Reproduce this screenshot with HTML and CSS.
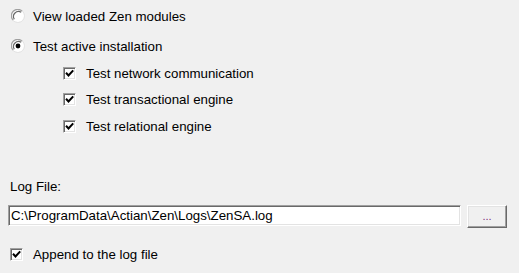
FILE: index.html
```html
<!DOCTYPE html>
<html lang="en">
<head>
    <meta charset="UTF-8">
    <title>Zen Test Options</title>
    <link rel="stylesheet" href="styles.css">
</head>
<body>
    <div class="panel">
        <div class="row radio-row first">
            <span class="radio">
                <svg width="14" height="14" viewBox="0 0 14 14">
                    <circle cx="7" cy="7" r="6" fill="#fff"/>
                    <path d="M2.2 11.2 A6.3 6.3 0 0 1 11.2 2.2" fill="none" stroke="#a0a0a0" stroke-width="1.2"/>
                    <path d="M3.3 10.2 A5 5 0 0 1 10.2 3.3" fill="none" stroke="#696969" stroke-width="1.2"/>
                    <path d="M2.2 11.6 A6.3 6.3 0 0 0 11.6 2.2" fill="none" stroke="#e3e3e3" stroke-width="1"/>
                </svg>
            </span>
            <span class="label">View loaded Zen modules</span>
        </div>
        <div class="row radio-row">
            <span class="radio">
                <svg width="14" height="14" viewBox="0 0 14 14">
                    <circle cx="7" cy="7" r="6" fill="#fff"/>
                    <path d="M2.2 11.2 A6.3 6.3 0 0 1 11.2 2.2" fill="none" stroke="#a0a0a0" stroke-width="1.2"/>
                    <path d="M3.3 10.2 A5 5 0 0 1 10.2 3.3" fill="none" stroke="#696969" stroke-width="1.2"/>
                    <path d="M2.2 11.6 A6.3 6.3 0 0 0 11.6 2.2" fill="none" stroke="#e3e3e3" stroke-width="1"/>
                    <circle cx="7" cy="7" r="2.4" fill="#000"/>
                </svg>
            </span>
            <span class="label">Test active installation</span>
        </div>

        <div class="sub-options">
            <div class="row check-row">
                <span class="check"><svg width="9" height="9" viewBox="0 0 9 9"><path d="M1 3.8 L3.5 6.5 L8.2 1.3" fill="none" stroke="#000" stroke-width="2"/></svg></span>
                <span class="label">Test network communication</span>
            </div>
            <div class="row check-row">
                <span class="check"><svg width="9" height="9" viewBox="0 0 9 9"><path d="M1 3.8 L3.5 6.5 L8.2 1.3" fill="none" stroke="#000" stroke-width="2"/></svg></span>
                <span class="label">Test transactional engine</span>
            </div>
            <div class="row check-row">
                <span class="check"><svg width="9" height="9" viewBox="0 0 9 9"><path d="M1 3.8 L3.5 6.5 L8.2 1.3" fill="none" stroke="#000" stroke-width="2"/></svg></span>
                <span class="label">Test relational engine</span>
            </div>
        </div>

        <div class="log-label">Log File:</div>
        <div class="log-line">
            <div class="text-box">C:\ProgramData\Actian\Zen\Logs\ZenSA.log</div>
            <div class="browse-button">...</div>
        </div>

        <div class="row append-row">
            <span class="check"><svg width="9" height="9" viewBox="0 0 9 9"><path d="M1 3.8 L3.5 6.5 L8.2 1.3" fill="none" stroke="#000" stroke-width="2"/></svg></span>
            <span class="label">Append to the log file</span>
        </div>
    </div>
</body>
</html>
```

FILE: styles.css
```css
body {
    margin: 0;
    padding: 0;
    background-color: #f0f0f0;
    font-family: 'Liberation Sans', Arial, sans-serif;
    font-size: 13.3px;
    color: #000;
}

.panel {
    display: flex;
    flex-direction: column;
    padding: 0 0 0 8px;
    width: 501px;
}

.row {
    display: flex;
    align-items: center;
    height: 16px;
}

.radio-row {
    padding-left: 3px;
    margin-top: 14px;
}

.radio-row.first {
    margin-top: 8px;
}

.radio {
    width: 14px;
    height: 14px;
    margin-right: 8px;
    display: flex;
}

.sub-options {
    display: flex;
    flex-direction: column;
    padding-left: 55px;
    margin-top: 11px;
    gap: 10.5px;
}

.check {
    width: 9px;
    height: 9px;
    padding: 1px;
    margin-right: 10px;
    background-color: #fff;
    border-top: 1px solid #a0a0a0;
    border-left: 1px solid #a0a0a0;
    border-bottom: 1px solid #fff;
    border-right: 1px solid #fff;
    box-shadow: inset 1px 1px 0 #696969, inset -1px -1px 0 #e3e3e3;
    display: flex;
    align-items: center;
    justify-content: center;
}

.log-label {
    margin-top: 45px;
    padding-left: 2px;
    height: 16px;
    line-height: 16px;
}

.log-line {
    display: flex;
    margin-top: 10px;
    gap: 6px;
}

.text-box {
    width: 449px;
    height: 19px;
    line-height: 19px;
    padding-left: 2px;
    background-color: #fff;
    border-top: 1px solid #a0a0a0;
    border-left: 1px solid #a0a0a0;
    border-bottom: 1px solid #fff;
    border-right: 1px solid #fff;
    box-shadow: inset 1px 1px 0 #696969, inset -1px -1px 0 #e3e3e3;
}

.browse-button {
    width: 38px;
    height: 21px;
    line-height: 21px;
    text-align: center;
    font-size: 11px;
    color: #7a2f7a;
    background-color: #f0f0f0;
    border-top: 1px solid #fff;
    border-left: 1px solid #fff;
    border-bottom: 1px solid #696969;
    border-right: 1px solid #696969;
    box-shadow: inset -1px -1px 0 #a0a0a0, inset 1px 1px 0 #e3e3e3;
}

.append-row {
    margin-top: 18px;
    padding-left: 2px;
}

.append-row .check {
    margin-right: 10px;
}
```
